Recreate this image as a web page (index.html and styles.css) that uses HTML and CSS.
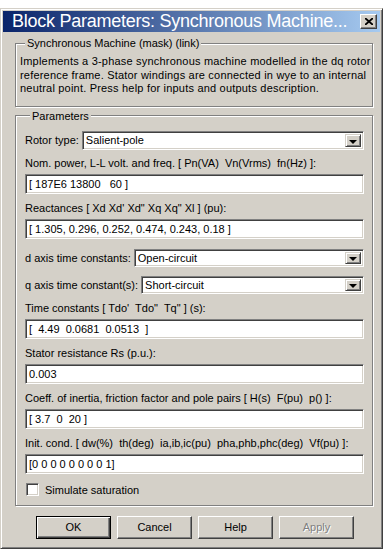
FILE: index.html
```html
<!DOCTYPE html>
<html lang="en">
<head>
    <meta charset="UTF-8">
    <title>Block Parameters: Synchronous Machine</title>
    <link rel="stylesheet" href="styles.css">
</head>
<body>
    <div class="window">
        <div class="titlebar">
            <span class="title">Block Parameters: Synchronous Machine...</span>
            <div class="close">
                <svg width="8" height="7" viewBox="0 0 8 7">
                    <path d="M0 0 L8 7 M8 0 L0 7" stroke="#000" stroke-width="1.8"/>
                </svg>
            </div>
        </div>

        <div class="content">
            <fieldset class="group desc">
                <legend>Synchronous Machine (mask) (link)</legend>
                <p>Implements a 3-phase synchronous machine modelled in the dq rotor<br>reference frame. Stator windings are connected in wye to an internal<br>neutral point. Press help for inputs and outputs description.</p>
            </fieldset>

            <fieldset class="group params">
                <legend>Parameters</legend>

                <div class="row first">
                    <span class="label">Rotor type:</span>
                    <div class="combo"><span>Salient-pole</span><div class="drop"></div></div>
                </div>

                <div class="label block">Nom. power, L-L volt. and freq. [ Pn(VA)  Vn(Vrms)  fn(Hz) ]:</div>
                <div class="edit">[ 187E6 13800   60 ]</div>

                <div class="label block">Reactances [ Xd Xd' Xd" Xq Xq" Xl ] (pu):</div>
                <div class="edit">[ 1.305, 0.296, 0.252, 0.474, 0.243, 0.18 ]</div>

                <div class="row combo-row">
                    <span class="label">d axis time constants:</span>
                    <div class="combo small"><span>Open-circuit</span><div class="drop"></div></div>
                </div>
                <div class="row combo-row">
                    <span class="label">q axis time constant(s):</span>
                    <div class="combo small"><span>Short-circuit</span><div class="drop"></div></div>
                </div>

                <div class="label block">Time constants [ Tdo'  Tdo"  Tq" ] (s):</div>
                <div class="edit">[  4.49  0.0681  0.0513  ]</div>

                <div class="label block">Stator resistance Rs (p.u.):</div>
                <div class="edit">0.003</div>

                <div class="label block">Coeff. of inertia, friction factor and pole pairs [ H(s)  F(pu)  p() ]:</div>
                <div class="edit">[ 3.7  0  20 ]</div>

                <div class="label block">Init. cond. [ dw(%)  th(deg)  ia,ib,ic(pu)  pha,phb,phc(deg)  Vf(pu) ]:</div>
                <div class="edit">[0 0 0 0 0 0 0 0 1]</div>

                <div class="check-row">
                    <div class="checkbox"></div>
                    <span class="label">Simulate saturation</span>
                </div>
            </fieldset>

            <div class="buttons">
                <div class="btn default">OK</div>
                <div class="btn">Cancel</div>
                <div class="btn">Help</div>
                <div class="btn disabled">Apply</div>
            </div>
        </div>
    </div>
</body>
</html>
```

FILE: styles.css
```css
body {
    margin: 0;
    background: #fff;
    font-family: "Liberation Sans", Arial, sans-serif;
    font-size: 11px;
    color: #000;
}
.window {
    width: 383px;
    height: 541px;
    margin-top: 8px;
    box-sizing: border-box;
    background: #d4d0c8;
    border: 1px solid;
    border-color: #d4d0c8 #404040 #404040 #d4d0c8;
    box-shadow: inset 1px 1px #fff, inset -1px -1px #808080;
    padding: 2px;
}
.titlebar {
    height: 21px;
    background: linear-gradient(to right, #0a246a, #a6caf0);
    display: flex;
    align-items: center;
    gap: 2px;
    padding: 0 3px 0 9px;
}
.title {
    flex: 1;
    min-width: 0;
    overflow: hidden;
    color: #fff;
    font-size: 18px;
    letter-spacing: -0.25px;
    line-height: 21px;
    white-space: nowrap;
}
.close {
    flex: none;
    width: 17px;
    height: 15px;
    box-sizing: border-box;
    background: #d4d0c8;
    border: 1px solid;
    border-color: #fff #404040 #404040 #fff;
    box-shadow: inset -1px -1px #808080;
    display: flex;
    align-items: center;
    justify-content: center;
}
.content {
    padding: 4px 7px 0 12px;
}
.group {
    margin: 0;
    border: 1px solid #808080;
    box-shadow: inset 1px 1px #fff, 1px 1px #fff;
    min-width: 0;
}
.group legend {
    padding: 0 2px;
    margin-left: 5px;
    line-height: 14px;
    background: #d4d0c8;
}
.desc {
    padding: 5px 4px 10px 4px;
}
.desc p {
    margin: 0;
    line-height: 13.5px;
    letter-spacing: 0.2px;
    white-space: nowrap;
}
.params {
    margin-top: 2px;
    padding: 7px 8px 8px 9px;
}
.label {
    white-space: pre;
    line-height: 14px;
}
.label.block {
    display: block;
    margin: 7px 0 4px 0;
}
.row {
    display: flex;
    align-items: center;
    gap: 3px;
}
.row.first {
    margin-top: 1px;
    margin-bottom: -1px;
}
.combo-row {
    margin-top: 10px;
}
.combo-row + .combo-row {
    margin-top: 9px;
}
.combo {
    flex: 1;
    height: 19px;
    box-sizing: border-box;
    background: #fff;
    border: 1px solid;
    border-color: #808080 #fff #fff #808080;
    box-shadow: inset 1px 1px #404040, inset -1px -1px #d4d0c8;
    display: flex;
    align-items: center;
    justify-content: space-between;
    padding: 2px 2px 2px 3px;
}
.combo.small {
    height: 18px;
}
.combo span {
    white-space: nowrap;
}
.drop {
    width: 16px;
    height: 100%;
    box-sizing: border-box;
    background: #d4d0c8;
    border: 1px solid;
    border-color: #d4d0c8 #404040 #404040 #d4d0c8;
    box-shadow: inset 1px 1px #fff, inset -1px -1px #808080;
    position: relative;
}
.drop::after {
    content: "";
    position: absolute;
    left: 3px;
    top: 5px;
    border-left: 4px solid transparent;
    border-right: 4px solid transparent;
    border-top: 4px solid #000;
}
.combo.small .drop::after {
    top: 4px;
}
.edit {
    height: 20px;
    box-sizing: border-box;
    background: #fff;
    border: 1px solid;
    border-color: #808080 #fff #fff #808080;
    box-shadow: inset 1px 1px #404040, inset -1px -1px #d4d0c8;
    padding: 0 3px;
    line-height: 18px;
    white-space: pre;
}
.check-row {
    display: flex;
    align-items: center;
    gap: 6px;
    margin-top: 9px;
    padding-left: 1px;
}
.checkbox {
    width: 13px;
    height: 13px;
    box-sizing: border-box;
    background: #fff;
    border: 1px solid;
    border-color: #808080 #fff #fff #808080;
    box-shadow: inset 1px 1px #404040, inset -1px -1px #d4d0c8;
}
.buttons {
    display: flex;
    gap: 6px;
    padding-left: 21px;
    margin-top: 10px;
}
.btn {
    width: 75px;
    height: 23px;
    box-sizing: border-box;
    border: 1px solid;
    border-color: #fff #404040 #404040 #fff;
    box-shadow: inset -1px -1px #808080;
    display: flex;
    align-items: center;
    justify-content: center;
}
.btn.default {
    border-color: #000;
    box-shadow: inset 1px 1px #fff, inset -1px -1px #404040, inset -2px -2px #808080;
}
.btn.disabled {
    color: #808080;
    text-shadow: 1px 1px #fff;
}
```
